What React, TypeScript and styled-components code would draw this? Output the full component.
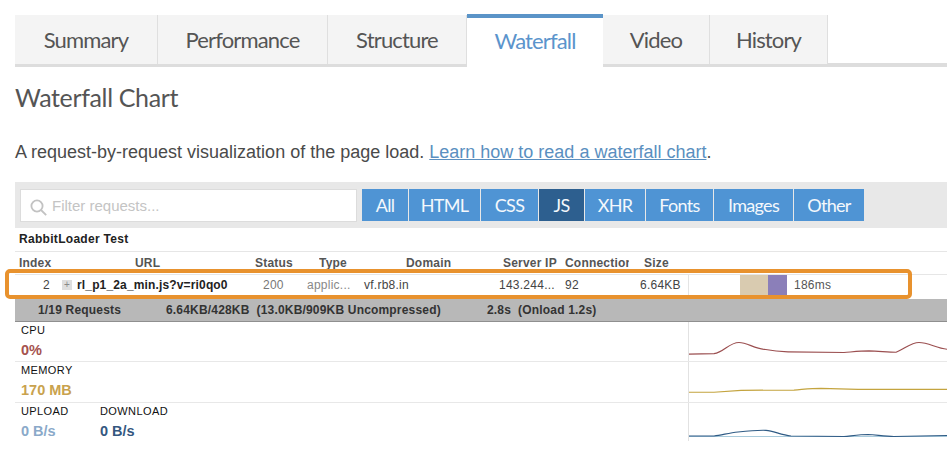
import React from "react";
import styled, { createGlobalStyle } from "styled-components";

const Global = createGlobalStyle`
  html, body { margin: 0; padding: 0; background: #fff; }
  body { font-family: "Liberation Sans", Arial, sans-serif; width: 947px; height: 464px; overflow: hidden; }
`;

const Page = styled.div`
  position: relative;
  width: 947px;
  height: 464px;
  padding: 14px 0 0 15px;
  box-sizing: border-box;
  overflow: hidden;
`;

const TabBar = styled.div`
  display: flex;
  height: 53px;
  border-bottom: 4px solid #dddddd;
  box-sizing: border-box;
`;

const Tab = styled.div<{ $w: number; $active?: boolean }>`
  width: ${(p) => p.$w}px;
  box-sizing: border-box;
  height: ${(p) => (p.$active ? 53 : 49)}px;
  margin-top: ${(p) => (p.$active ? 0 : 1)}px;
  padding-bottom: ${(p) => (p.$active ? 5 : 1)}px;
  display: flex;
  align-items: center;
  justify-content: center;
  font-family: Lato, sans-serif;
  font-size: 22px;
  letter-spacing: -0.85px;
  color: ${(p) => (p.$active ? "#5b94cc" : "#555555")};
  background: ${(p) => (p.$active ? "#ffffff" : "#f4f4f4")};
  border-top: ${(p) => (p.$active ? "4px solid #5b94c8" : "none")};
  border-right: ${(p) => (p.$active ? "none" : "1px solid #dfdfdf")};
  position: relative;
  z-index: ${(p) => (p.$active ? 1 : 0)};
`;

const Title = styled.h2`
  margin: 13px 0 0 0;
  font-family: Lato, sans-serif;
  font-weight: 400;
  font-size: 25px;
  line-height: 34px;
  letter-spacing: -0.35px;
  color: #555555;
`;

const Intro = styled.p`
  margin: 26px 0 0 0;
  font-size: 18px;
  line-height: 24px;
  color: #4a4a4a;
`;

const IntroLink = styled.a`
  color: #5a8fc0;
  text-decoration: underline;
`;

const FilterBar = styled.div`
  margin-top: 18px;
  height: 46px;
  background: #e8e8e8;
  display: flex;
  align-items: center;
  padding-left: 5px;
  box-sizing: border-box;
`;

const SearchBox = styled.div`
  width: 337px;
  height: 33px;
  background: #fff;
  border: 1px solid #dcdcdc;
  box-sizing: border-box;
  display: flex;
  align-items: center;
  padding-left: 9px;
  gap: 5px;
  margin-right: 5px;
`;

const SearchIcon = styled.svg`
  margin-top: 4px;
  flex: none;
`;

const SearchHint = styled.span`
  font-size: 15px;
  color: #c4c4c4;
`;

const Filters = styled.div`
  display: flex;
  gap: 1px;
`;

const FilterBtn = styled.div<{ $w: number; $on?: boolean }>`
  width: ${(p) => p.$w}px;
  height: 32px;
  display: flex;
  align-items: center;
  justify-content: center;
  background: ${(p) => (p.$on ? "#2d5f8f" : "#4f94d4")};
  color: #f4f8fc;
  font-family: Lato, sans-serif;
  font-size: 18px;
  letter-spacing: -0.7px;
`;

const TestName = styled.div`
  height: 23px;
  line-height: 22px;
  padding-left: 4px;
  font-size: 12px;
  font-weight: 700;
  letter-spacing: 0.3px;
  color: #222;
`;

const HeadRow = styled.div`
  display: flex;
  height: 24px;
  box-sizing: border-box;
  padding-bottom: 1px;
  align-items: center;
  border-top: 1px solid #e6e6e6;
  border-bottom: 1px solid #e6e6e6;
  font-size: 12px;
  font-weight: 700;
  letter-spacing: 0.2px;
  color: #555;
`;

const HeadCell = styled.div<{ $w: number; $pad?: number }>`
  width: ${(p) => p.$w}px;
  padding-left: ${(p) => p.$pad ?? 0}px;
  box-sizing: border-box;
  white-space: nowrap;
  overflow: hidden;
  flex: none;
`;

const DataRow = styled.div`
  display: flex;
  height: 24px;
  box-sizing: border-box;
  padding-bottom: 4px;
  align-items: center;
  font-size: 12px;
  letter-spacing: 0.25px;
  color: #444;
`;

const Cell = styled.div<{ $w: number; $right?: boolean; $tone?: string; $bold?: boolean }>`
  width: ${(p) => p.$w}px;
  flex: none;
  box-sizing: border-box;
  white-space: nowrap;
  text-align: ${(p) => (p.$right ? "right" : "left")};
  color: ${(p) => p.$tone ?? "inherit"};
  font-weight: ${(p) => (p.$bold ? 700 : 400)};
  letter-spacing: ${(p) => (p.$bold ? "0.15px" : "inherit")};
`;

const Toggle = styled.span`
  width: 10px;
  height: 10px;
  margin: 0 5px 0 12px;
  flex: none;
  background: #dedede;
  color: #888;
  font-size: 10px;
  line-height: 10px;
  text-align: center;
  letter-spacing: 0;
`;

const Timeline = styled.div`
  align-self: stretch;
  flex: 1;
  display: flex;
  align-items: center;
  border-left: 1px solid #e4e4e4;
  padding-left: 51px;
`;

const Bar = styled.div<{ $w: number; $c: string }>`
  width: ${(p) => p.$w}px;
  height: 20px;
  background: ${(p) => p.$c};
`;

const BarTime = styled.span`
  margin-left: 7px;
  color: #555;
`;

const SummaryBar = styled.div`
  height: 23px;
  background: #b8b8b8;
  border-bottom: 1px solid #8f8f8f;
  box-sizing: border-box;
  display: flex;
  align-items: center;
  font-size: 12px;
  font-weight: 700;
  letter-spacing: 0.18px;
  color: #333;
`;

const SummaryPart = styled.span<{ $w: number; $pad?: number }>`
  width: ${(p) => p.$w}px;
  padding-left: ${(p) => p.$pad ?? 0}px;
  box-sizing: border-box;
  white-space: nowrap;
  flex: none;
`;

const MetricRow = styled.div<{ $h: number; $line?: boolean }>`
  display: flex;
  height: ${(p) => p.$h}px;
  box-sizing: border-box;
  border-bottom: ${(p) => (p.$line ? "1px solid #e8e8e8" : "none")};
`;

const MetricInfo = styled.div`
  width: 673px;
  flex: none;
  display: flex;
  padding: 2px 0 0 6px;
  box-sizing: border-box;
`;

const Metric = styled.div<{ $w?: number }>`
  width: ${(p) => (p.$w ? `${p.$w}px` : "auto")};
`;

const MetricLabel = styled.div`
  font-size: 11px;
  line-height: 13px;
  letter-spacing: 0.4px;
  color: #111;
`;

const MetricValue = styled.div<{ $c: string }>`
  margin-top: 3px;
  font-size: 14.5px;
  line-height: 20px;
  font-weight: 700;
  color: ${(p) => p.$c};
`;

const Chart = styled.svg`
  display: block;
  flex: none;
  width: 259px;
  height: 100%;
  border-left: 1px solid #e2e2e2;
`;

const Highlight = styled.div`
  position: absolute;
  left: 5px;
  top: 269px;
  width: 907px;
  height: 30px;
  border: 4px solid #e8922e;
  border-radius: 5px;
  box-sizing: border-box;
  pointer-events: none;
`;

const tabs = [
  { n: "Summary", w: 143 },
  { n: "Performance", w: 170 },
  { n: "Structure", w: 139 },
  { n: "Waterfall", w: 136, a: true },
  { n: "Video", w: 107 },
  { n: "History", w: 118 },
];

const filters = [
  { n: "All", w: 46 },
  { n: "HTML", w: 71 },
  { n: "CSS", w: 57 },
  { n: "JS", w: 45, on: true },
  { n: "XHR", w: 60 },
  { n: "Fonts", w: 67 },
  { n: "Images", w: 79 },
  { n: "Other", w: 70 },
];

const heads = [
  { n: "Index", w: 120, p: 4 },
  { n: "URL", w: 120 },
  { n: "Status", w: 64 },
  { n: "Type", w: 87 },
  { n: "Domain", w: 97 },
  { n: "Server IP", w: 62 },
  { n: "Connection", w: 64 },
  { n: "Size", w: 55, p: 15 },
];

export default function App() {
  return (
    <Page>
      <Global />
      <TabBar>
        {tabs.map((t) => (
          <Tab key={t.n} $w={t.w} $active={t.a}>
            {t.n}
          </Tab>
        ))}
      </TabBar>
      <Title>Waterfall Chart</Title>
      <Intro>
        A request-by-request visualization of the page load.{" "}
        <IntroLink>Learn how to read a waterfall chart</IntroLink>.
      </Intro>
      <FilterBar>
        <SearchBox>
          <SearchIcon width="17" height="17" viewBox="0 0 17 17" fill="none" stroke="#c2c2c2" strokeWidth="1.8">
            <circle cx="7" cy="7" r="5.6" />
            <path d="M11 11l5.2 5.2" />
          </SearchIcon>
          <SearchHint>Filter requests...</SearchHint>
        </SearchBox>
        <Filters>
          {filters.map((f) => (
            <FilterBtn key={f.n} $w={f.w} $on={f.on}>
              {f.n}
            </FilterBtn>
          ))}
        </Filters>
      </FilterBar>
      <TestName>RabbitLoader Test</TestName>
      <HeadRow>
        {heads.map((h) => (
          <HeadCell key={h.n} $w={h.w} $pad={h.p}>
            {h.n}
          </HeadCell>
        ))}
      </HeadRow>
      <DataRow>
        <Cell $w={35} $right>2</Cell>
        <Toggle>+</Toggle>
        <Cell $w={186} $bold $tone="#222">rl_p1_2a_min.js?v=ri0qo0</Cell>
        <Cell $w={44} $tone="#777">200</Cell>
        <Cell $w={57} $tone="#888">applic...</Cell>
        <Cell $w={135}>vf.rb8.in</Cell>
        <Cell $w={66}>143.244...</Cell>
        <Cell $w={75}>92</Cell>
        <Cell $w={48}>6.64KB</Cell>
        <Timeline>
          <Bar $w={28} $c="#d9cbb0" />
          <Bar $w={19} $c="#8b7fb9" />
          <BarTime>186ms</BarTime>
        </Timeline>
      </DataRow>
      <SummaryBar>
        <SummaryPart $w={151} $pad={23}>1/19 Requests</SummaryPart>
        <SummaryPart $w={321}>6.64KB/428KB&nbsp; (13.0KB/909KB Uncompressed)</SummaryPart>
        <SummaryPart $w={200}>2.8s&nbsp; (Onload 1.2s)</SummaryPart>
      </SummaryBar>
      <MetricRow $h={40} $line>
        <MetricInfo>
          <Metric>
            <MetricLabel>CPU</MetricLabel>
            <MetricValue $c="#a5524e">0%</MetricValue>
          </Metric>
        </MetricInfo>
        <Chart viewBox="0 0 259 40" preserveAspectRatio="none" fill="none">
          <path
            d="M0 33 L25 32.5 C35 31 40 21 50 21 C58 21 65 27 75 28 C85 30 90 30.5 99 30.7 L155 31.3 C165 30.5 172 29.7 180 29.7 C190 30 200 31 207 31 C215 28 222 21 230 21 C240 21 248 27.5 259 28"
            stroke="#9b4f50"
            strokeWidth="1.2"
          />
        </Chart>
      </MetricRow>
      <MetricRow $h={41} $line>
        <MetricInfo>
          <Metric>
            <MetricLabel>MEMORY</MetricLabel>
            <MetricValue $c="#c9a24e">170 MB</MetricValue>
          </Metric>
        </MetricInfo>
        <Chart viewBox="0 0 259 41" preserveAspectRatio="none" fill="none">
          <path d="M0 31 L25 31 L52 29 L105 28.8 C115 28 122 27 132 27 L169 28 L259 28" stroke="#c4a43f" strokeWidth="1.2" />
        </Chart>
      </MetricRow>
      <MetricRow $h={38}>
        <MetricInfo>
          <Metric $w={79}>
            <MetricLabel>UPLOAD</MetricLabel>
            <MetricValue $c="#8aa9c9">0 B/s</MetricValue>
          </Metric>
          <Metric>
            <MetricLabel>DOWNLOAD</MetricLabel>
            <MetricValue $c="#34577f">0 B/s</MetricValue>
          </Metric>
        </MetricInfo>
        <Chart viewBox="0 0 259 38" preserveAspectRatio="none" fill="none">
          <path d="M0 33.5 L259 33.5" stroke="#a9cbdc" strokeWidth="1.2" />
          <path
            d="M0 33 L25 33 C33 32 40 30 49 29 C58 28 68 27 77 27.3 C85 28 92 32 102 33 L155 33.5 C165 32.5 172 31.5 179 31.5 C188 32 196 33.5 205 33.5 L259 32.5"
            stroke="#2f5b85"
            strokeWidth="1.2"
          />
        </Chart>
      </MetricRow>
      <Highlight />
    </Page>
  );
}
